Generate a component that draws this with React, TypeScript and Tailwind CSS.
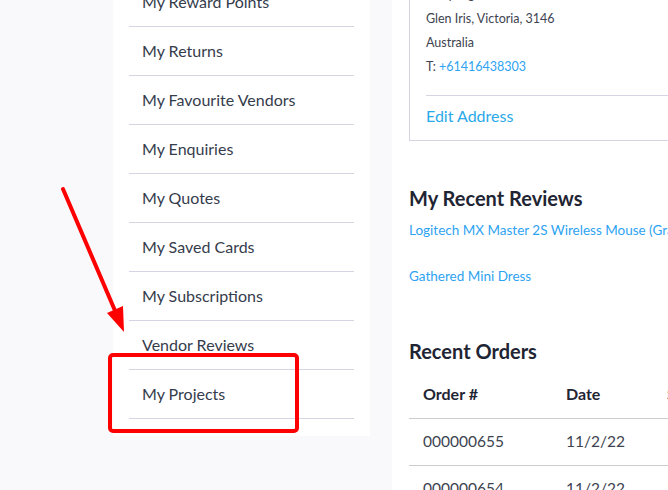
import React from "react";

const menu = [
  "My Reward Points",
  "My Returns",
  "My Favourite Vendors",
  "My Enquiries",
  "My Quotes",
  "My Saved Cards",
  "My Subscriptions",
  "Vendor Reviews",
  "My Projects",
];

const orders = [
  { id: "000000655", date: "11/2/22" },
  { id: "000000654", date: "11/2/22" },
];

const font = { fontFamily: "Lato, 'Open Sans', sans-serif" };

const App: React.FC = () => {
  return (
    <div
      className="relative h-[490px] w-[668px] overflow-hidden bg-[#f9f9fb] flex"
      style={font}
    >
      {/* Sidebar */}
      <div className="ml-[113px] w-[257px] shrink-0 self-start bg-white px-4 pb-[17px] -mt-[22px]">
        {menu.map((item) => (
          <div
            key={item}
            className="h-[49px] flex items-center pl-[13px] border-b border-[#d6d3e2] text-[16px] text-[#353c4c]"
          >
            {item}
          </div>
        ))}
      </div>

      {/* Main */}
      <div className="ml-[22px] flex-1 bg-white pl-[17px] min-w-0">
        {/* Address box */}
        <div className="-mt-[20px] border border-[#d6d3e2] border-r-0 pl-4 pt-[2px] pb-[13px] w-[400px]">
          <div className="text-[12.5px] leading-[24px] text-[#3d4350]">
            <div>Kooyong Road</div>
            <div>Glen Iris, Victoria, 3146</div>
            <div>Australia</div>
            <div>
              T: <span className="text-[#2ea3f2]">+61416438303</span>
            </div>
          </div>
          <div className="mt-[16px] border-t border-[#d6d3e2] pt-[9px] text-[16px] leading-[22px] text-[#2aa9e8]">
            Edit Address
          </div>
        </div>

        {/* Reviews */}
        <h2 className="mt-[45px] text-[20px] leading-[24px] font-bold text-[#1f2533]">
          My Recent Reviews
        </h2>
        <div className="mt-[11px] text-[13.5px] leading-[18px] text-[#2ea3f2] whitespace-nowrap">
          Logitech MX Master 2S Wireless Mouse (Graphite)
        </div>
        <div className="mt-[28px] text-[13.5px] leading-[18px] text-[#2ea3f2]">
          Gathered Mini Dress
        </div>

        {/* Orders */}
        <h2 className="mt-[54px] text-[20px] leading-[24px] font-bold text-[#1f2533]">
          Recent Orders
        </h2>
        <div className="mt-[6px] w-[400px]">
          <div className="flex h-[50px] items-center border-b border-[#cccccc] text-[16px] font-bold text-[#1f2533]">
            <div className="w-[143px] pl-[14px]">Order #</div>
            <div className="w-[115px] pl-[14px]">Date</div>
            <div>Ship To</div>
          </div>
          {orders.map((o) => (
            <div
              key={o.id}
              className="flex h-[47px] items-center border-b border-[#cccccc] text-[15.5px] text-[#3d4350]"
            >
              <div className="w-[143px] pl-[14px]">{o.id}</div>
              <div className="w-[115px] pl-[14px]">{o.date}</div>
              <div>Bob</div>
            </div>
          ))}
        </div>
      </div>

      {/* Annotation: arrow */}
      <svg
        className="absolute left-0 top-0 pointer-events-none"
        width="668"
        height="490"
      >
        <line
          x1="63"
          y1="189"
          x2="116"
          y2="313"
          stroke="#ff0000"
          strokeWidth="4"
          strokeLinecap="round"
        />
        <polygon points="124,332 107,313 123,306" fill="#ff0000" />
      </svg>

      {/* Annotation: highlight box */}
      <div className="absolute left-[108px] top-[353px] w-[191px] h-[80px] border-4 border-[#ff0000] rounded-[5px] pointer-events-none" />
    </div>
  );
};

export default App;
